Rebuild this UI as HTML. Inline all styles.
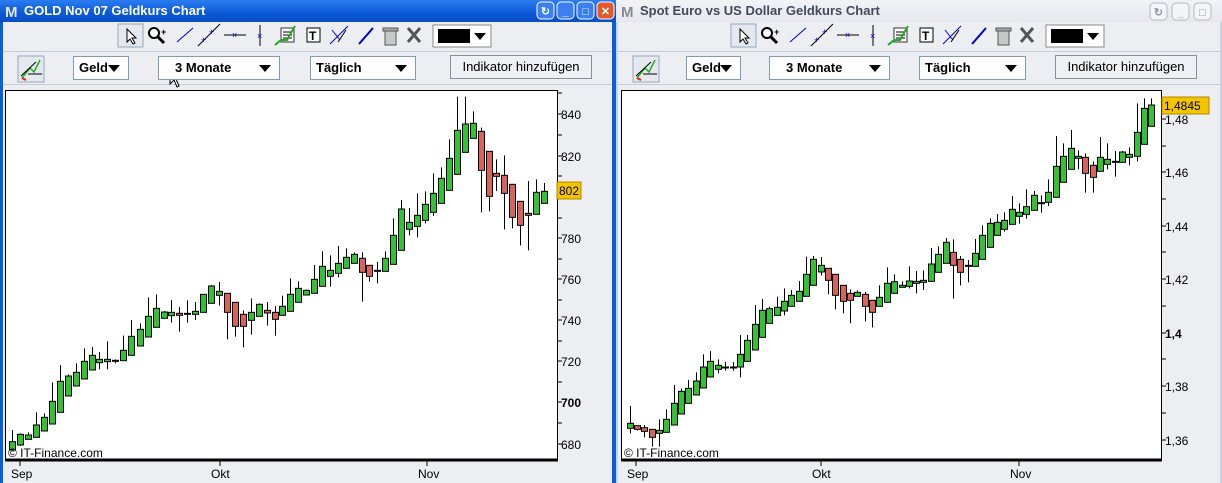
<!DOCTYPE html>
<html><head><meta charset="utf-8">
<style>
*{box-sizing:border-box;margin:0;padding:0}
body{width:1222px;height:483px;overflow:hidden;background:#ece9d8;font-family:"Liberation Sans",sans-serif;position:relative}
.win{position:absolute;top:0;height:483px;background:#eceef2}
.title{position:absolute;left:0;right:0;top:0;height:22px;color:#fff;font-weight:bold;font-size:13px;line-height:22px;padding-left:24px}
.sel{position:absolute;height:24px;background:#fff;border:1px solid #7f9db9;font-size:13px;line-height:22px;padding-left:5px;font-weight:bold;color:#000}
.sel:after{content:"";position:absolute;right:8px;top:8px;border-left:6px solid transparent;border-right:6px solid transparent;border-top:7px solid #000}
.btn{position:absolute;height:24px;background:#eef0f3;border:1px solid #8a8f99;font-size:13px;line-height:22px;text-align:center}
svg{position:absolute;left:0;top:0}
</style></head><body>
<div class="win" style="left:0;width:616px;background:#0a5fd8">
 <div class="title" style="background:linear-gradient(#2b7cf0,#0a58d6 60%,#0a4fc4)">GOLD Nov 07 Geldkurs Chart</div>
 <div style="position:absolute;left:3px;top:22px;width:609px;height:461px;background:#eceef2"></div>
</div>
<div class="win" style="left:616px;width:606px;background:#c8d3ea">
 <div class="title" style="background:linear-gradient(#f2f3f6,#e6e8ee);color:#404a5c">Spot Euro vs US Dollar Geldkurs Chart</div>
 <div style="position:absolute;left:2px;top:22px;width:602px;height:461px;background:#eceef2"></div>
</div>

<svg width="1222" height="483" xmlns="http://www.w3.org/2000/svg" id="s" font-family="Liberation Sans, sans-serif"></svg>

<div class="sel" style="left:73px;top:56px;width:56px">Geld</div>
<div class="sel" style="left:158px;top:56px;width:122px;padding-left:16px">3 Monate</div>
<div class="sel" style="left:310px;top:56px;width:106px">Täglich</div>
<div class="btn" style="left:450px;top:55px;width:142px">Indikator hinzufügen</div>

<div class="sel" style="left:686px;top:56px;width:55px">Geld</div>
<div class="sel" style="left:769px;top:56px;width:121px;padding-left:16px">3 Monate</div>
<div class="sel" style="left:919px;top:56px;width:107px">Täglich</div>
<div class="btn" style="left:1055px;top:55px;width:142px">Indikator hinzufügen</div>

<script>
const s=document.getElementById('s');let h='';
function R(x,y,w,hh,f,st){h+=`<rect x="${x}" y="${y}" width="${w}" height="${hh}" fill="${f}" ${st?`stroke="${st}"`:''}/>`}
function T(x,y,t,sz,fw,c,anc){h+=`<text x="${x}" y="${y}" font-size="${sz||12}" font-weight="${fw||'normal'}" fill="${c||'#000'}" ${anc?`text-anchor="${anc}"`:''}>${t}</text>`}
function L(a,b,c,d,col,w){h+=`<line x1="${a}" y1="${b}" x2="${c}" y2="${d}" stroke="${col||'#000'}" stroke-width="${w||1}"/>`}
function titleIcons(ox,active){
 h+=`<text x="${ox+5}" y="17" font-size="15" font-weight="bold" fill="${active?'#e8e8e8':'#8a8a8a'}">M</text>`;
}
titleIcons(0,1);titleIcons(616,0);
[[537,'#3b7ff0'],[557,'#3b7ff0'],[577,'#3b7ff0'],[597,'#e05a2c']].forEach(([x,c],i)=>{
 h+=`<rect x="${x}" y="2" width="17" height="17" rx="4" fill="${c}" stroke="#fff"/>`;
 const g=['↻','_','□','✕'][i];h+=`<text x="${x+8.5}" y="15" font-size="11" font-weight="bold" fill="#fff" text-anchor="middle">${g}</text>`;
});
[[1150],[1172],[1194]].forEach(([x],i)=>{
 h+=`<rect x="${x}" y="3" width="17" height="17" rx="4" fill="#f4f5f8" stroke="#b0b8c8"/>`;
 const g=['↻','_','□'][i];h+=`<text x="${x+8.5}" y="16" font-size="11" font-weight="bold" fill="#8a94aa" text-anchor="middle">${g}</text>`;
});
function toolbar(ox,w,c1x){
 R(ox+3,51,w,1,'#c6ccd6');R(ox+3,84,w,1,'#c6ccd6');
 const d=c1x;
 R(d,24,25,23,'#e4e8ef','#9aa6b8');
 h+=`<path d="M${d+9} 29 l0 13 l3-3 l3 5 l2-1 l-3-5 l4 0z" fill="#fff" stroke="#000"/>`;
 h+=`<circle cx="${d+36}" cy="33" r="5" fill="#fff" stroke="#000" stroke-width="2"/><line x1="${d+40}" y1="37" x2="${d+46}" y2="43" stroke="#000" stroke-width="3"/><text x="${d+43}" y="35" font-size="9" font-weight="bold">+</text>`;
 L(d+59,42,d+75,28,'#00c');L(d+80,46,d+102,24,'#000');h+=`<text x="${d+83}" y="43" font-size="9" fill="#00c">+</text><text x="${d+91}" y="35" font-size="9" fill="#00c">+</text>`;
 L(d+106,35,d+128,35);h+=`<text x="${d+114}" y="38" font-size="9" fill="#00c">×</text>`;
 L(d+142,25,d+142,46);h+=`<text x="${d+139}" y="39" font-size="9" fill="#00c">×</text>`;
 R(d+163,28,13,14,'#fff','#333');L(d+165,32,d+174,32);L(d+165,35,d+174,35);L(d+165,38,d+174,38);
 h+=`<polyline points="${d+157},45 ${d+163},40 ${d+169},40 ${d+177},26" fill="none" stroke="#2a2" stroke-width="2"/>`;
 R(d+189,28,13,14,'#fff','#000');h+=`<text x="${d+191}" y="40" font-size="12" font-weight="bold">T</text>`;
 L(d+212,44,d+230,26,'#00c');L(d+214,30,d+222,40,'#00c');L(d+220,42,d+228,30,'#000');
 L(d+241,44,d+255,28,'#00c',2);
 R(d+267,31,11,14,'#c8c8c8','#555');R(d+265,28,15,3,'#aaa','#555');
 h+=`<path d="M${d+290} 28 l12 14 M${d+302} 28 l-12 14" stroke="#555" stroke-width="3"/>`;
 R(d+315,25,58,22,'#fff','#888');R(d+320,29,32,14,'#000');
 h+=`<path d="M${d+356} 33 l12 0 l-6 7z" fill="#000"/>`;
 R(ox+18,56,26,26,'#e4e8ef','#9aa6b8');
 h+=`<polyline points="${ox+22},78 ${ox+30},68 ${ox+34},72 ${ox+40},60" fill="none" stroke="#2a2" stroke-width="1.5"/>`;
 L(ox+21,76,ox+36,62);L(ox+28,74,ox+42,74);h+=`<path d="M${ox+22} 78 l4 2" stroke="#d22" stroke-width="2"/>`;
}
toolbar(0,609,118);toolbar(615,602,731);

function chart(px,pw,axisX,ticks,candles,xf,labels,badge,months){
 R(px,90,pw,370,'#fff');
 L(px,90.5,axisX,90.5,'#000',1);L(px+0.5,90,px+0.5,461,'#000',1);
 L(px,460,axisX+1,460,'#000',3);L(axisX+0.5,90,axisX+0.5,461,'#000',1);
 ticks.forEach(y=>L(axisX,y,axisX+5,y,'#000'));
 labels.forEach(([y,t,b])=>T(axisX+4,y+5,t,12,b?'bold':'normal'));
 candles.forEach(c=>{
  const x=Math.round(xf(c[0]));const bt=90+c[1]/3,bb=90+c[2]/3,wt=90+c[3]/3,wb=90+c[4]/3;
  L(x+0.5,wt,x+0.5,wb,'#000');
  const hh=Math.max(bb-bt,1.5);
  if(c[5]=='d'){L(x-3,bt+0.5,x+4,bt+0.5,'#000',2)}
  else R(x-2.5,bt,6,hh,c[5]=='g'?'#33c233':'#d9625a','#000');
 });
 R(badge[0],badge[1],badge[2],17,'#f5c400','#b08a00');T(badge[0]+2,badge[1]+13,badge[3],12);
 T(px+3,457,'© IT-Finance.com',12);
 months.forEach(([x,t])=>{L(x,461,x,466,'#000');T(x-9,478,t,12)});
}
const A=[[37,1055,1080,1020,1080,'g'],[58,1033,1065,1030,1068,'g'],[79,1035,1048,1027,1048,'g'],[100,1005,1042,967,1042,'g'],[121,982,1023,970,1023,'g'],[142,934,1002,877,1002,'g'],[163,874,967,825,967,'g'],[182,858,918,853,918,'g'],[203,847,888,820,888,'g'],[224,814,867,775,867,'g'],[245,796,840,771,840,'g'],[265,808,818,786,838,'g'],[286,808,815,754,838,'g'],[307,811,815,808,820,'d'],[328,781,812,737,812,'g'],[349,739,796,690,796,'g'],[370,718,768,700,768,'g'],[391,679,741,622,741,'g'],[412,655,712,613,712,'g'],[433,666,685,663,685,'g'],[451,667,677,630,698,'g'],[472,670,676,651,725,'r'],[493,670,672,631,698,'d'],[514,664,673,636,690,'g'],[535,613,667,613,667,'g'],[556,588,640,585,640,'g'],[577,604,616,576,647,'g'],[598,610,667,610,748,'r'],[619,637,709,637,740,'r'],[640,673,709,661,772,'r'],[661,667,691,625,734,'g'],[682,643,679,640,679,'g'],[703,661,669,636,707,'r'],[723,667,688,648,737,'r'],[741,649,676,617,676,'g'],[762,613,664,565,664,'g'],[783,595,637,574,637,'g'],[804,601,615,598,615,'g'],[825,568,610,525,610,'g'],[846,529,589,484,589,'g'],[867,541,559,496,590,'g'],[888,520,550,468,562,'g'],[909,502,535,475,535,'g'],[929,493,520,487,520,'g'],[950,505,547,487,635,'r'],[970,526,559,526,575,'r'],[991,541,544,516,580,'d'],[1012,505,544,484,544,'g'],[1031,436,523,385,523,'g'],[1052,357,481,330,481,'g'],[1073,397,418,354,436,'g'],[1094,376,409,310,442,'g'],[1115,343,391,304,400,'g'],[1136,310,367,250,378,'g'],[1157,265,340,232,340,'g'],[1178,205,301,148,301,'g'],[1199,121,253,20,253,'g'],[1220,102,187,20,187,'g'],[1241,100,145,64,145,'g'],[1261,124,241,113,367,'r'],[1282,184,319,184,364,'r'],[1300,250,259,208,303,'r'],[1321,256,310,196,418,'r'],[1342,283,382,283,415,'r'],[1363,334,406,334,466,'r'],[1384,370,376,273,481,'r'],[1405,307,373,268,373,'g'],[1426,304,340,279,340,'g']];
const B=[[40,1000,1015,948,1030,'g'],[58,1007,1018,1007,1022,'r'],[76,1013,1024,1005,1042,'r'],[96,1018,1042,1018,1070,'r'],[115,1021,1030,988,1070,'g'],[133,988,1027,958,1027,'g'],[153,940,1005,885,1005,'g'],[172,904,972,895,972,'g'],[190,895,940,870,940,'g'],[210,873,915,847,915,'g'],[228,831,894,793,894,'g'],[246,814,861,783,861,'g'],[267,826,838,808,850,'g'],[286,831,833,816,842,'d'],[305,831,833,816,842,'d'],[324,793,831,735,862,'g'],[342,751,814,735,814,'g'],[362,703,780,645,780,'g'],[381,661,742,627,742,'g'],[399,656,700,650,700,'g'],[419,652,676,620,676,'g'],[437,634,663,595,676,'g'],[455,616,649,600,649,'g'],[476,604,634,573,634,'g'],[494,553,619,500,619,'g'],[512,508,586,498,586,'g'],[533,526,546,501,556,'g'],[551,535,571,535,613,'r'],[569,553,616,553,658,'r'],[590,586,634,586,670,'r'],[608,610,631,598,700,'r'],[626,607,619,601,619,'g'],[646,613,649,606,694,'r'],[666,631,667,631,712,'r'],[683,622,649,586,649,'g'],[703,580,637,532,637,'g'],[722,575,610,553,610,'g'],[742,586,592,574,592,'g'],[760,573,589,529,595,'g'],[779,574,580,543,610,'g'],[798,571,577,541,600,'g'],[817,522,574,474,574,'g'],[836,493,547,469,547,'g'],[856,457,520,444,520,'g'],[875,487,526,448,626,'r'],[893,508,547,498,586,'r'],[913,526,528,510,577,'d'],[931,490,529,447,529,'g'],[949,436,508,406,508,'g'],[969,400,472,385,472,'g'],[988,397,436,372,436,'g'],[1007,391,418,367,425,'g'],[1026,358,403,318,403,'g'],[1045,367,379,340,401,'g'],[1063,350,373,298,386,'g'],[1083,316,361,303,361,'g'],[1101,338,340,316,368,'d'],[1120,307,337,268,348,'g'],[1140,229,322,138,322,'g'],[1158,199,277,160,277,'g'],[1179,175,238,120,238,'g'],[1197,199,205,181,238,'g'],[1216,202,250,190,308,'r'],[1236,226,262,214,308,'r'],[1255,202,244,141,244,'g'],[1273,208,223,160,238,'g'],[1293,214,216,183,260,'d'],[1311,186,217,183,217,'g'],[1329,193,202,172,226,'g'],[1349,127,199,40,214,'g'],[1368,55,163,25,163,'g'],[1386,45,109,25,109,'g']];
chart(5,552,557,[93,114,135,156,176,197,218,238,259,279,300,320,341,361,382,402,423,444],A,z=>12+(z-37)*0.383,
 [[114,'840'],[156,'820'],[238,'780'],[279,'760'],[320,'740'],[361,'720'],[402,'700',1],[444,'680']],[557,182,24,'802'],[[20,'Sep'],[220,'Okt'],[427,'Nov']]);
chart(621,540,1161,[119,146,172,199,226,252,279,306,333,359,386,413,440],B,z=>630+(z-40)*0.387,
 [[119,'1,48'],[172,'1,46'],[226,'1,44'],[279,'1,42'],[333,'1,4',1],[386,'1,38'],[440,'1,36']],[1162,97,47,'1,4845'],[[636,'Sep'],[821,'Okt'],[1019,'Nov']]);
h+=`<path d="M170 68 l0 16 l4-4 l3 7 l2-1 l-3-7 l5 0z" fill="#fff" stroke="#000"/>`;
s.innerHTML=h;
</script>
</body></html>
